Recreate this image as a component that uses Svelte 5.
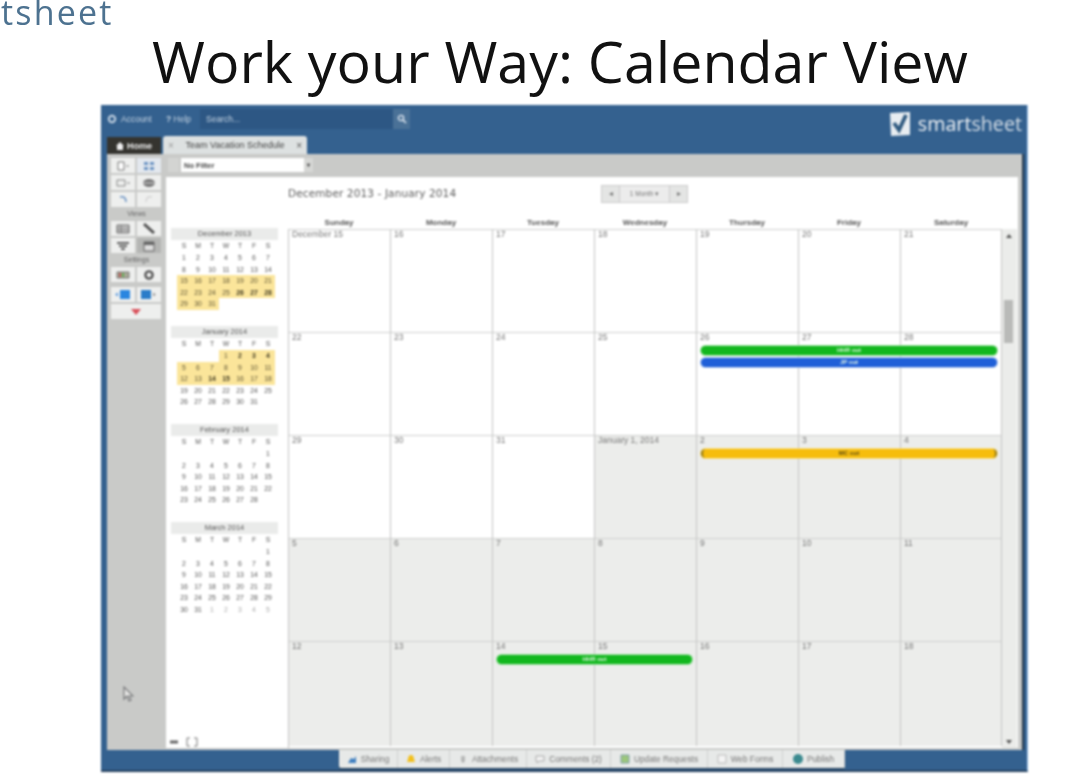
<script>
  const letters = ["S", "M", "T", "W", "T", "F", "S"];

  const months = [
    { name: "December 2013", first: 0, days: 31, from: 15, to: 31, bold: [26, 27, 28] },
    { name: "January 2014", first: 3, days: 31, from: 1, to: 18, bold: [2, 3, 4, 14, 15] },
    { name: "February 2014", first: 6, days: 28, from: 0, to: 0, bold: [] },
    { name: "March 2014", first: 6, days: 31, from: 0, to: 0, bold: [], trail: 5 }
  ];

  function cells(m) {
    const out = [];
    for (let i = 0; i < m.first; i++) out.push({ n: "" });
    for (let d = 1; d <= m.days; d++) {
      out.push({ n: d, on: d >= m.from && d <= m.to, bold: m.bold.includes(d) });
    }
    for (let d = 1; d <= (m.trail || 0); d++) out.push({ n: d, faint: true });
    return out;
  }

  const dayNames = ["Sunday", "Monday", "Tuesday", "Wednesday", "Thursday", "Friday", "Saturday"];

  const weeks = [
    ["December 15", 16, 17, 18, 19, 20, 21],
    [22, 23, 24, 25, 26, 27, 28],
    [29, 30, 31, "January 1, 2014", 2, 3, 4],
    [5, 6, 7, 8, 9, 10, 11],
    [12, 13, 14, 15, 16, 17, 18]
  ];

  const isShaded = (r, c) => r > 2 || (r === 2 && c >= 3);

  const events = [
    { label: "HHR out", row: 2, from: 5, to: 8, top: 14, cls: "green" },
    { label: "JP out", row: 2, from: 5, to: 8, top: 26, cls: "blue" },
    { label: "MC out", row: 3, from: 5, to: 8, top: 14, cls: "yellow" },
    { label: "HHR out", row: 5, from: 3, to: 5, top: 14, cls: "green" }
  ];

  const footer = [
    { label: "Sharing", w: 59, d: "M1 9l3-5 3 1 2-3v7z", fill: "#3f7fc0", stroke: "none" },
    { label: "Alerts", w: 52, d: "M5 1c2 0 3 2 3 4l1 3H1l1-3c0-2 1-4 3-4z", fill: "#f2c01e", stroke: "none" },
    { label: "Attachments", w: 77, d: "M4 2v5a1 1 0 0 0 2 0V2", fill: "none", stroke: "#888" },
    { label: "Comments (2)", w: 84, d: "M1 2h8v5H4L2 9V7H1z", fill: "#f4f4f4", stroke: "#aaa" },
    { label: "Update Requests", w: 97, d: "M1 1h8v8H1z", fill: "#9cc77c", stroke: "#7f9fa8" },
    { label: "Web Forms", w: 75, d: "M1 1h8v8H1z", fill: "#f4f4f4", stroke: "#bbb" },
    { label: "Publish", w: 62, d: "M5 0a5 5 0 1 0 0 10A5 5 0 0 0 5 0z", fill: "#3b8a8f", stroke: "none" }
  ];
</script>

<div class="page">
  <div class="brand">tsheet</div>
  <h1>Work your Way: Calendar View</h1>

  <div class="frame">
    <header class="topbar">
      <div class="account">
        <svg width="10" height="10" viewBox="0 0 10 10"><circle cx="5" cy="5" r="3.2" fill="none" stroke="#c4d3e2" stroke-width="2" /></svg>
        <span>Account</span>
      </div>
      <div class="help"><b>?</b> Help</div>
      <div class="search">
        <span>Search...</span>
        <div class="search-btn">
          <svg width="10" height="10" viewBox="0 0 10 10"><circle cx="4" cy="4" r="2.6" fill="none" stroke="#dfe8f0" stroke-width="1.4" /><path d="M6 6l3 3" stroke="#dfe8f0" stroke-width="1.6" /></svg>
        </div>
      </div>
      <div class="logo">
        <svg width="22" height="26" viewBox="0 0 22 26">
          <path d="M1 2l20-1v23L2 25z" fill="#e8edf1" />
          <path d="M5 12l5 7 7-15" fill="none" stroke="#2f5a80" stroke-width="3.8" />
        </svg>
        <span class="smart">smart</span><span class="logo-sheet">sheet</span>
      </div>
    </header>

    <nav class="tabs">
      <div class="home">
        <svg width="8" height="8" viewBox="0 0 8 8"><path d="M4 0L0 4h1v4h6V4h1z" fill="#eee" /></svg>
        Home
      </div>
      <div class="sheet-tab">
        <span class="x">×</span>
        <span>Team Vacation Schedule</span>
        <span class="x dark">×</span>
      </div>
    </nav>

    <div class="panel">
      <aside class="tools">
        <div class="tool-grid">
          <button><svg width="16" height="10" viewBox="0 0 16 10"><path d="M3 1h6v8H3z" fill="#fff" stroke="#777" /><path d="M11 5h3" stroke="#888" /></svg></button>
          <button class="soft"><svg width="14" height="10" viewBox="0 0 14 10"><path d="M2 1h4v3H2zM8 1h4v3H8zM2 6h4v3H2zM8 6h4v3H8z" fill="#6d94c4" /></svg></button>
          <button><svg width="16" height="10" viewBox="0 0 16 10"><path d="M2 2h8v6H2z" fill="none" stroke="#888" /><path d="M12 5h3" stroke="#888" /></svg></button>
          <button><svg width="14" height="10" viewBox="0 0 14 10"><ellipse cx="7" cy="5" rx="6" ry="4" fill="#777" /><path d="M1 5h12" stroke="#ddd" /></svg></button>
          <button><svg width="12" height="10" viewBox="0 0 12 10"><path d="M3 2c4-1 6 1 6 5" fill="none" stroke="#6d94c4" stroke-width="1.6" /></svg></button>
          <button><svg width="12" height="10" viewBox="0 0 12 10"><path d="M9 2C5 1 3 3 3 7" fill="none" stroke="#d4d4d4" stroke-width="1.4" /></svg></button>
        </div>
        <div class="tool-label">Views</div>
        <div class="tool-grid">
          <button><svg width="14" height="10" viewBox="0 0 14 10"><path d="M1 1h12v8H1z" fill="#ccc" stroke="#666" /><path d="M1 4h12M1 6.500h12M5 1v8" stroke="#666" stroke-width=".7" /></svg></button>
          <button><svg width="14" height="11" viewBox="0 0 14 11"><path d="M2 1l10 9" stroke="#555" stroke-width="3" /></svg></button>
          <button><svg width="14" height="10" viewBox="0 0 14 10"><path d="M1 1h12v2H1zM3 4h8v2H3zM5 7h4v2H5z" fill="#666" /></svg></button>
          <button class="active"><svg width="12" height="12" viewBox="0 0 12 12"><path d="M1 2h10v9H1z" fill="#ddd" stroke="#666" /><path d="M1 2h10v3H1z" fill="#666" /></svg></button>
        </div>
        <div class="tool-label">Settings</div>
        <div class="tool-grid">
          <button><svg width="14" height="10" viewBox="0 0 14 10"><path d="M1 2h12v6H1z" fill="#a9a996" stroke="#777" /><path d="M3 3h2v4H3z" fill="#b55" /><path d="M6 3h2v4H6z" fill="#6a5" /></svg></button>
          <button><svg width="12" height="12" viewBox="0 0 12 12"><circle cx="6" cy="6" r="3.600" fill="none" stroke="#555" stroke-width="2.400" /></svg></button>
        </div>
        <div class="tool-grid blue-row">
          <button><svg width="18" height="11" viewBox="0 0 18 11"><path d="M1 5.500l3-2v4z" fill="#5a9ae0" /><path d="M6 1h10v9H6z" fill="#2a86e0" /></svg></button>
          <button><svg width="18" height="11" viewBox="0 0 18 11"><path d="M1 1h10v9H1z" fill="#2a7cc9" /><path d="M16 5.500l-3-2v4z" fill="#999" /></svg></button>
          <button class="wide"><svg width="10" height="6" viewBox="0 0 10 6"><path d="M0 0h10L5 6z" fill="#d9505a" /></svg></button>
        </div>
        <svg class="cursor" width="11" height="16" viewBox="0 0 11 16"><path d="M1 1v12l3-3 2 5 2-1-2-4h4z" fill="#e8e8e6" stroke="#77787a" stroke-width="1.200" /></svg>
      </aside>

      <div class="main">
        <div class="filterbar">
          <div class="filter-btn"></div>
          <div class="select">
            <span>No Filter</span>
            <i>▾</i>
          </div>
        </div>

        <div class="sheet">
          <div class="mini-col">
            {#each months as m}
              <section class="mini">
                <div class="mini-head">{m.name}</div>
                <div class="mini-letters">
                  {#each letters as l}<span>{l}</span>{/each}
                </div>
                <div class="mini-days">
                  {#each cells(m) as d}
                    <span class:on={d.on} class:bold={d.bold} class:faint={d.faint}>{d.n}</span>
                  {/each}
                </div>
              </section>
            {/each}
            <div class="mini-foot">
              <svg width="10" height="8" viewBox="0 0 10 8"><path d="M1 4h8" stroke="#666" stroke-width="3" /></svg>
              <svg width="12" height="10" viewBox="0 0 12 10"><path d="M1 1h3M8 1h3M1 9h3M8 9h3M1 1v8M11 1v8" fill="none" stroke="#777" /></svg>
            </div>
          </div>

          <div class="cal">
            <div class="cal-top">
              <div class="range">December 2013 - January 2014</div>
              <div class="pager">
                <span class="arrow">◂</span>
                <span class="zoom">1 Month ▾</span>
                <span class="arrow">▸</span>
              </div>
            </div>
            <div class="dow">
              {#each dayNames as name}<span>{name}</span>{/each}
            </div>
            <div class="cal-body">
              <div class="grid">
                {#each weeks as week, r}
                  {#each week as label, c}
                    <div class="cell" class:shaded={isShaded(r, c)} style="grid-row:{r + 1};grid-column:{c + 1}">{label}</div>
                  {/each}
                {/each}
                {#each events as e}
                  <div class="event {e.cls}" style="grid-row:{e.row};grid-column:{e.from}/{e.to};margin-top:{e.top}px">{e.label}</div>
                {/each}
              </div>
              <div class="scroll">
                <span class="up"></span>
                <div class="thumb"></div>
                <span class="down"></span>
              </div>
            </div>
          </div>
        </div>
      </div>
    </div>

    <footer class="bottom">
      <div class="bottom-tabs">
        {#each footer as f}
          <div class="bottom-tab" style="width:{f.w}px">
            <svg width="10" height="10" viewBox="0 0 10 10"><path d={f.d} fill={f.fill} stroke={f.stroke} /></svg>
            {f.label}
          </div>
        {/each}
      </div>
    </footer>
  </div>
</div>

<style>
  :global(body) {
    background: #fff;
  }

  .page {
    width: 1070px;
    height: 778px;
    overflow: hidden;
    font-family: "Liberation Sans", Arial, sans-serif;
  }

  .brand {
    height: 27px;
    padding-left: 1px;
    font: 34px/24px "Open Sans", sans-serif;
    color: #4d7290;
    letter-spacing: 2.2px;
    filter: blur(0.4px);
  }

  h1 {
    margin: 0;
    height: 78px;
    padding-left: 50px;
    box-sizing: border-box;
    text-align: center;
    font: 400 57.3px/68px "Open Sans", sans-serif;
    color: #111;
    filter: blur(0.3px);
  }

  .frame {
    width: 927px;
    height: 667px;
    margin-left: 101px;
    background: #34618f;
    border-right: 1px solid #9cc3ea;
    border-bottom: 2px solid #26415f;
    box-sizing: border-box;
    filter: blur(0.8px);
    display: flex;
    flex-direction: column;
  }

  .topbar {
    height: 31px;
    display: flex;
    align-items: flex-start;
    padding: 4px 5px 0 6px;
    box-sizing: border-box;
    color: #c4d3e2;
    font-size: 8.5px;
  }

  .account {
    display: flex;
    align-items: center;
    gap: 4px;
    width: 59px;
    height: 20px;
  }

  .help {
    width: 34px;
    line-height: 20px;
  }

  .search {
    width: 210px;
    height: 20px;
    background: #2d5784;
    display: flex;
    align-items: center;
    justify-content: space-between;
    padding-left: 6px;
    box-sizing: border-box;
  }

  .search-btn {
    width: 17px;
    height: 20px;
    background: #4a7197;
    display: flex;
    align-items: center;
    justify-content: center;
  }

  .logo {
    margin-left: auto;
    margin-top: 2px;
    display: flex;
    align-items: center;
    font: 400 19.7px/26px "Open Sans", sans-serif;
  }

  .logo svg {
    margin-right: 7px;
  }

  .smart {
    color: #f0f3f6;
  }

  .logo-sheet {
    color: #d4dde6;
  }

  .tabs {
    height: 18px;
    display: flex;
    align-items: flex-end;
    padding-left: 6px;
    gap: 2px;
  }

  .home {
    width: 54px;
    height: 17px;
    background: #35342f;
    color: #eee;
    font-size: 9px;
    font-weight: 700;
    display: flex;
    align-items: center;
    justify-content: center;
    gap: 3px;
    box-sizing: border-box;
  }

  .sheet-tab {
    width: 144px;
    height: 18px;
    background: #dde1e1;
    border-radius: 3px 3px 0 0;
    color: #444;
    font-size: 9px;
    display: flex;
    align-items: center;
    justify-content: space-between;
    padding: 0 5px;
    box-sizing: border-box;
  }

  .x {
    color: #999;
    font-size: 10px;
  }

  .x.dark {
    color: #555;
  }

  .panel {
    height: 596px;
    margin: 0 5px 0 6px;
    display: flex;
    background: #c9cac8;
    box-shadow: 2px 0 0 #26394d;
  }

  .tools {
    width: 59px;
    box-sizing: border-box;
    padding: 4px 4px 0 4px;
    position: relative;
    flex: none;
  }

  .tool-grid {
    display: grid;
    grid-template-columns: 24px 24px;
    gap: 2px;
    grid-auto-rows: 15px;
  }

  .tool-grid button {
    border: 0;
    padding: 0;
    background: #eeefee;
    display: flex;
    align-items: center;
    justify-content: center;
  }

  .tool-grid button.soft {
    background: #e3e8ee;
  }

  .tool-grid button.active {
    background: #b4b5b3;
  }

  .tool-grid button.wide {
    grid-column: 1 / 3;
  }

  .blue-row {
    margin-top: 5px;
  }

  .tool-label {
    height: 14px;
    line-height: 14px;
    text-align: center;
    font-size: 7px;
    color: #666;
  }

  .cursor {
    position: absolute;
    left: 16px;
    top: 532px;
  }

  .main {
    flex: 1;
    min-width: 0;
    display: flex;
    flex-direction: column;
    padding: 0 4px 2px 0;
  }

  .filterbar {
    height: 23px;
    display: flex;
    align-items: flex-start;
    padding-top: 4px;
    box-sizing: border-box;
    gap: 2px;
  }

  .filter-btn {
    width: 11px;
    height: 14px;
    margin-left: 2px;
    background: #d3d4d2;
  }

  .select {
    width: 132px;
    height: 14px;
    background: #fff;
    font-size: 7.5px;
    font-weight: 700;
    color: #444;
    display: flex;
    align-items: center;
    justify-content: space-between;
    padding-left: 3px;
    box-sizing: border-box;
  }

  .select i {
    width: 9px;
    height: 14px;
    background: #d6d7d5;
    font-style: normal;
    font-size: 6px;
    line-height: 14px;
    text-align: center;
  }

  .sheet {
    flex: 1;
    background: #fff;
    display: flex;
    min-height: 0;
    color: #666;
  }

  .mini-col {
    width: 122px;
    flex: none;
    padding: 51px 10px 0 5px;
    box-sizing: border-box;
    display: flex;
    flex-direction: column;
  }

  .mini {
    height: 98px;
    flex: none;
  }

  .mini-head {
    height: 12px;
    background: #eaebea;
    font-size: 7.5px;
    line-height: 12px;
    text-align: center;
    color: #555;
  }

  .mini-letters,
  .mini-days {
    display: grid;
    grid-template-columns: repeat(7, 14px);
    padding-left: 6px;
    font-size: 6.8px;
    text-align: center;
    color: #555;
  }

  .mini-letters {
    height: 12px;
    line-height: 12px;
  }

  .mini-days {
    grid-auto-rows: 11.500px;
    line-height: 11.500px;
  }

  .mini-days .on {
    background: #fbe59a;
    color: #5d5435;
  }

  .mini-days .bold {
    font-weight: 700;
    color: #3e3820;
  }

  .mini-days .faint {
    color: #aaa;
  }

  .mini-foot {
    margin-top: auto;
    margin-left: -4px;
    height: 13px;
    display: flex;
    align-items: center;
    gap: 7px;
    padding-left: 2px;
  }

  .cal {
    flex: 1;
    min-width: 0;
    display: flex;
    flex-direction: column;
  }

  .cal-top {
    height: 40px;
    display: flex;
    align-items: flex-start;
    justify-content: space-between;
    padding-top: 9px;
    box-sizing: border-box;
  }

  .range {
    font: 10.500px/14px "DejaVu Sans", sans-serif;
    letter-spacing: 0.12px;
    color: #5c5c5c;
  }

  .pager {
    display: flex;
    height: 18px;
    width: 87px;
    margin-right: 330px;
    margin-top: -1px;
    background: #e4e5e4;
    border: 1px solid #ccc;
    box-sizing: border-box;
    font-size: 6.500px;
    line-height: 16px;
    color: #777;
  }

  .arrow {
    width: 17px;
    text-align: center;
    font-size: 8px;
  }

  .zoom {
    flex: 1;
    text-align: center;
    border-left: 1px solid #ccc;
    border-right: 1px solid #ccc;
    background: #ececec;
  }

  .dow {
    height: 12px;
    width: 714px;
    display: grid;
    grid-template-columns: repeat(7, 102px);
    text-align: center;
    font-size: 8px;
    font-weight: 700;
    line-height: 11px;
    color: #555;
  }

  .cal-body {
    flex: 1;
    display: flex;
    min-height: 0;
  }

  .grid {
    width: 714px;
    display: grid;
    grid-template-columns: repeat(6, 102px) 101px;
    grid-template-rows: 103px 103px 103px 103px 105px;
    box-sizing: border-box;
    border-left: 1px solid #c4c4c4;
  }

  .cell {
    border-top: 1px solid #cfd0cf;
    border-right: 1px solid #c4c4c4;
    padding-left: 3px;
    font-size: 8.500px;
    line-height: 8px;
    color: #777;
    min-width: 0;
    overflow: hidden;
    white-space: nowrap;
  }

  .cell.shaded {
    background: #ecedeb;
  }

  .event {
    align-self: start;
    height: 9px;
    margin: 0 5px 0 4px;
    border-radius: 5px;
    box-sizing: border-box;
    font-size: 6px;
    font-weight: 700;
    line-height: 9px;
    text-align: center;
    color: #e4f6e4;
    z-index: 1;
  }

  .event.green {
    background: #12b71e;
    box-shadow: 0 0 0 1px #a5e3a8;
  }

  .event.blue {
    background: #1f5fd8;
    box-shadow: 0 0 0 1px #b5cbf0;
  }

  .event.yellow {
    background: #f6bd0d;
    box-shadow: 0 0 0 1px #f9e08c;
    border-left: 2px solid #8d7414;
    border-right: 2px solid #8d7414;
    color: #5b4a10;
  }

  .scroll {
    width: 15px;
    background: #ebecea;
    position: relative;
  }

  .thumb {
    position: absolute;
    top: 71px;
    left: 2px;
    width: 9px;
    height: 43px;
    background: #b9bab8;
  }

  .up,
  .down {
    position: absolute;
    left: 4px;
    border-left: 3px solid transparent;
    border-right: 3px solid transparent;
  }

  .up {
    top: 5px;
    border-bottom: 4px solid #555;
  }

  .down {
    bottom: 4px;
    border-top: 4px solid #555;
  }

  .bottom {
    flex: 1;
    display: flex;
    align-items: flex-start;
    padding-left: 238px;
  }

  .bottom-tabs {
    display: flex;
    height: 18px;
    background: #e7e9e8;
    box-shadow: 0 1px 1px #20364c;
    border-radius: 0 0 2px 2px;
  }

  .bottom-tab {
    box-sizing: border-box;
    display: flex;
    align-items: center;
    justify-content: center;
    gap: 4px;
    font-size: 8.3px;
    color: #777;
    border-right: 1px solid #cfd1d0;
    white-space: nowrap;
  }

  .bottom-tab svg {
    flex: none;
  }
</style>
